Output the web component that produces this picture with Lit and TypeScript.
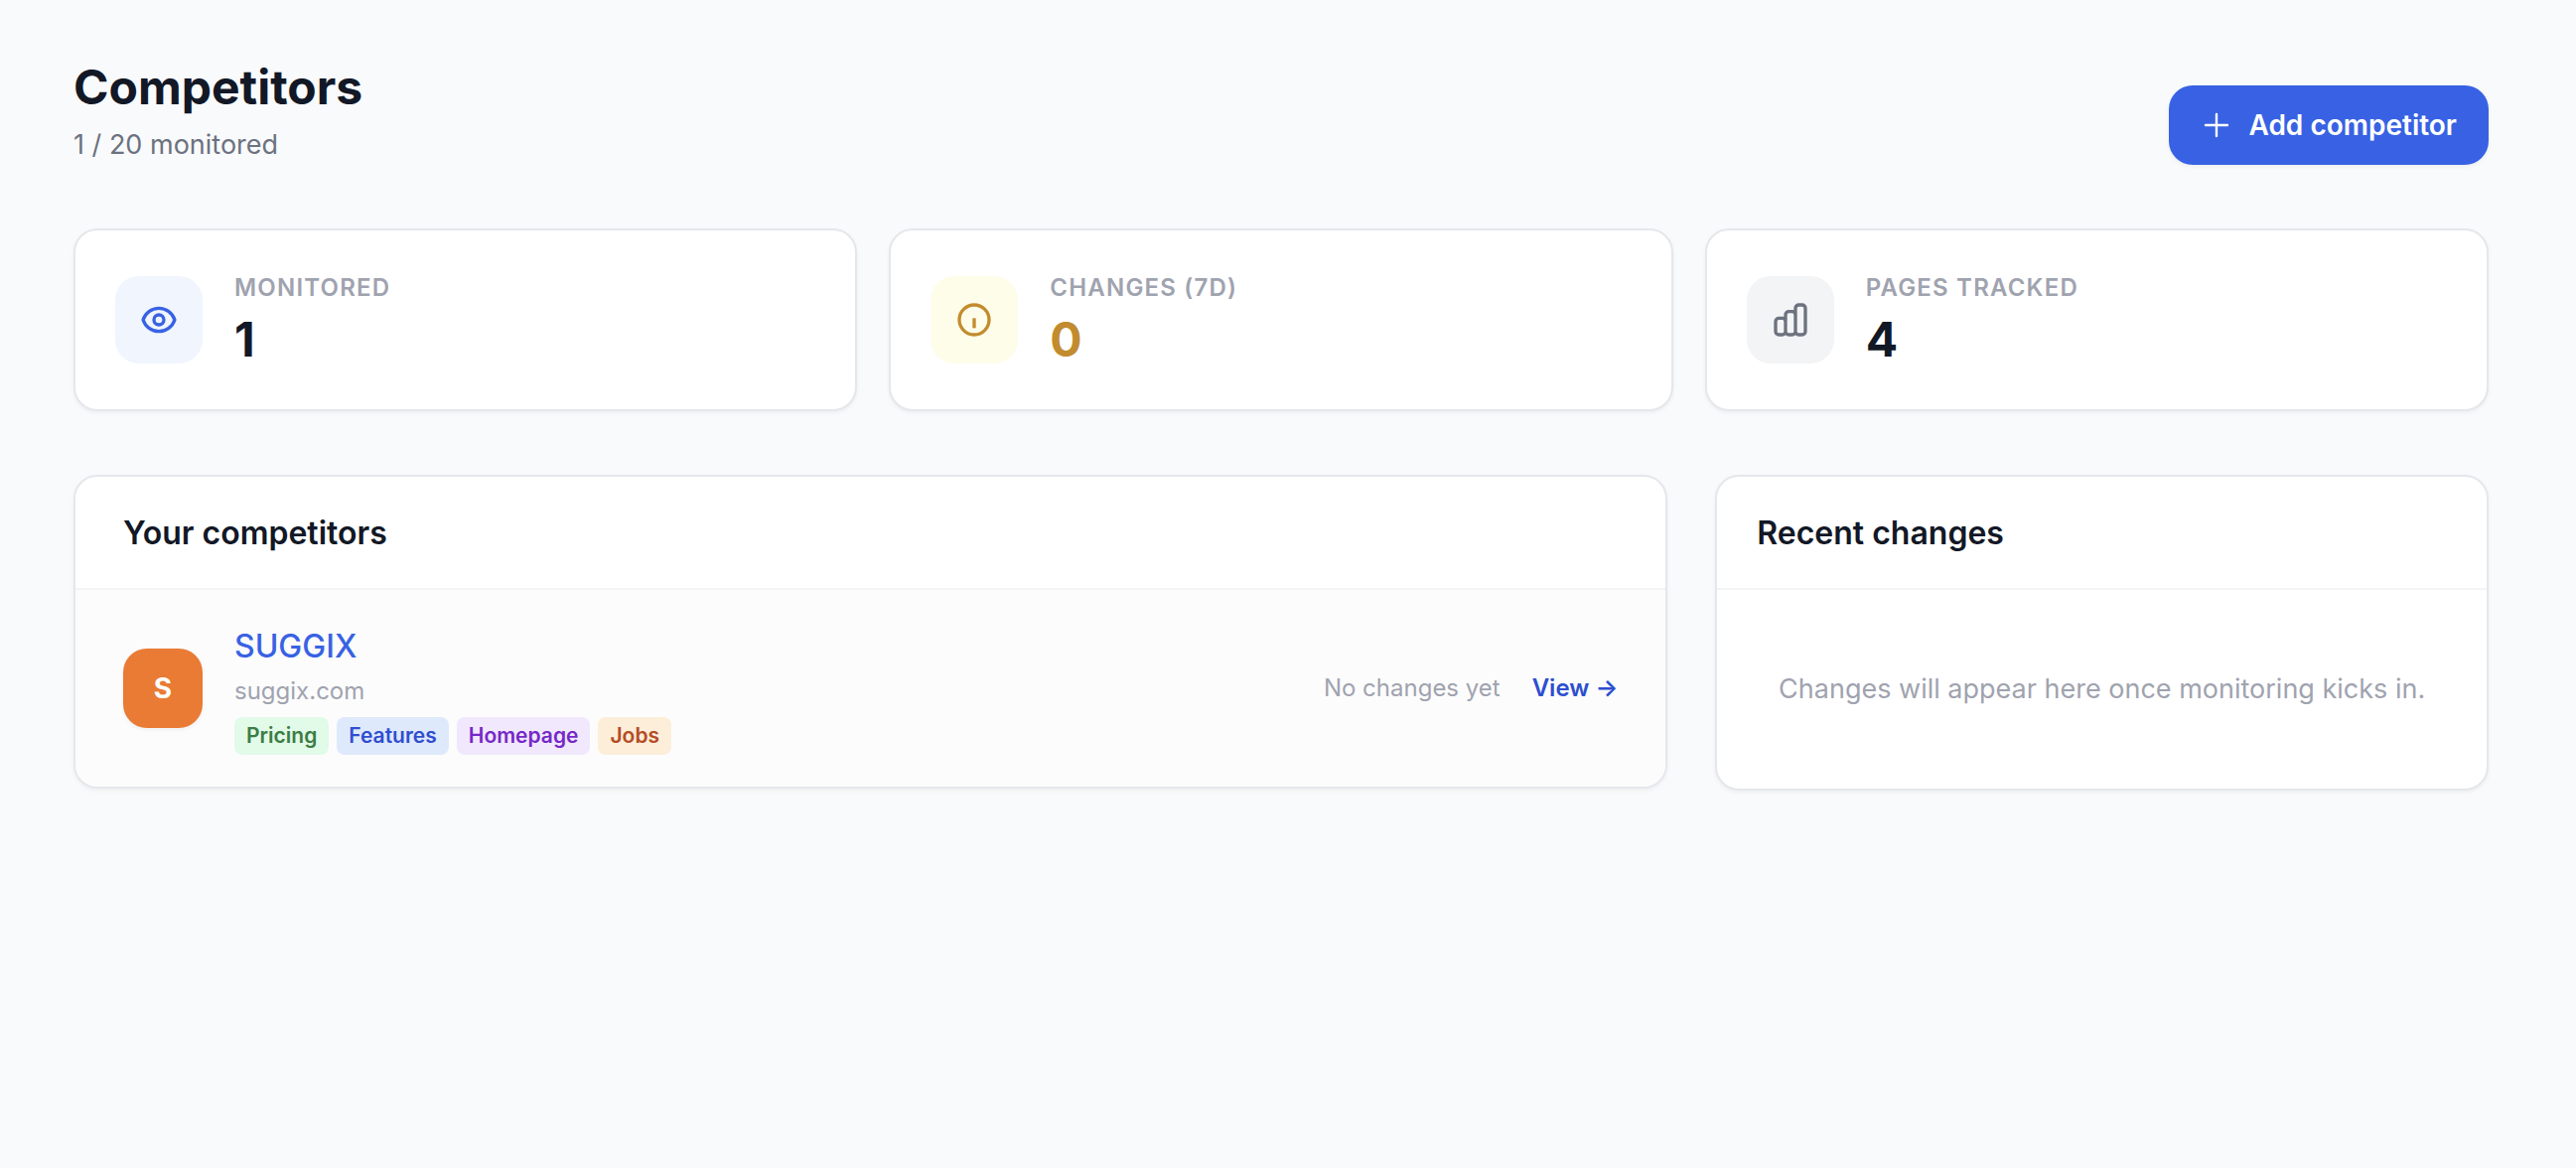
import { LitElement, html, css, svg } from "lit";
import { customElement, property } from "lit/decorators.js";

type Tone = "blue" | "amber" | "gray";

interface Competitor {
  name: string;
  domain: string;
  pages: { label: string; kind: string }[];
  status: string;
}

const icons = {
  blue: svg`<path d="M15 12a3 3 0 11-6 0 3 3 0 016 0z"/><path d="M2.458 12C3.732 7.943 7.523 5 12 5c4.478 0 8.268 2.943 9.542 7-1.274 4.057-5.064 7-9.542 7-4.477 0-8.268-2.943-9.542-7z"/>`,
  amber: svg`<circle cx="12" cy="12" r="9"/><path d="M12 11v6"/>`,
  gray: svg`<path d="M9 19v-6a2 2 0 00-2-2H5a2 2 0 00-2 2v6a2 2 0 002 2h2a2 2 0 002-2zm0 0V9a2 2 0 012-2h2a2 2 0 012 2v10m-6 0a2 2 0 002 2h2a2 2 0 002-2m0 0V5a2 2 0 012-2h2a2 2 0 012 2v14a2 2 0 01-2 2h-2a2 2 0 01-2-2z"/>`,
};

@customElement("stat-card")
export class StatCard extends LitElement {
  @property() label = "";
  @property() value = "";
  @property() tone: Tone = "gray";

  static styles = css`
    :host {
      display: flex;
      align-items: center;
      gap: 32px;
      padding: 40px;
      box-sizing: border-box;
      background: #fff;
      border: 2px solid #e5e7eb;
      border-radius: 24px;
      box-shadow: 0 2px 4px rgba(0, 0, 0, 0.05);
    }
    .icon {
      display: flex;
      align-items: center;
      justify-content: center;
      flex: none;
      width: 88px;
      height: 88px;
      border-radius: 24px;
    }
    .icon svg {
      width: 40px;
      height: 40px;
      fill: none;
      stroke: currentColor;
      stroke-width: 2;
    }
    .icon.blue { background: #f0f5fe; color: #3862e3; }
    .icon.amber { background: #fefdea; color: #c28c2e; }
    .icon.gray { background: #f3f4f6; color: #6c727f; }
    .label {
      margin: 0 0 4px;
      font-size: 24px;
      line-height: 36px;
      font-weight: 600;
      letter-spacing: 0.05em;
      text-transform: uppercase;
      color: #9fa3af;
    }
    .value {
      margin: 0;
      font-size: 48px;
      line-height: 60px;
      font-weight: 700;
      color: #121826;
    }
    .value.amber { color: #c28c2e; }
  `;

  render() {
    return html`
      <div class="icon ${this.tone}">
        <svg viewBox="0 0 24 24" aria-hidden="true">${icons[this.tone]}</svg>
      </div>
      <div>
        <p class="label">${this.label}</p>
        <p class="value ${this.tone}">${this.value}</p>
      </div>
    `;
  }
}

@customElement("app-root")
export class AppRoot extends LitElement {
  private competitors: Competitor[] = [
    {
      name: "SUGGIX",
      domain: "suggix.com",
      pages: [
        { label: "Pricing", kind: "pricing" },
        { label: "Features", kind: "features" },
        { label: "Homepage", kind: "homepage" },
        { label: "Jobs", kind: "jobs" },
      ],
      status: "No changes yet",
    },
  ];

  static styles = css`
    :host {
      display: block;
      min-height: 100vh;
      box-sizing: border-box;
      padding: 56px 88px 56px 74px;
      background: #f9fafc;
      color: #121826;
      font-family: Inter, "Liberation Sans", sans-serif;
    }
    h1, h2, h3, p, ul { margin: 0; padding: 0; }
    a { text-decoration: none; }
    .top {
      display: flex;
      align-items: flex-end;
      justify-content: space-between;
      margin-bottom: 64px;
    }
    .title {
      font-size: 48px;
      line-height: 64px;
      font-weight: 700;
    }
    .subtitle {
      margin-top: 6px;
      font-size: 27px;
      line-height: 40px;
      color: #6c727f;
    }
    .add {
      display: flex;
      align-items: center;
      gap: 16px;
      height: 80px;
      padding: 0 32px;
      border: 0;
      border-radius: 24px;
      background: #3862e3;
      color: #fff;
      font: 600 28px/40px Inter, "Liberation Sans", sans-serif;
      box-shadow: 0 2px 4px rgba(0, 0, 0, 0.05);
      cursor: pointer;
    }
    .add svg {
      width: 32px;
      height: 32px;
      fill: none;
      stroke: currentColor;
      stroke-width: 1.8;
      stroke-linecap: round;
    }
    .stats {
      display: grid;
      grid-template-columns: repeat(3, 1fr);
      gap: 32px;
      margin-bottom: 64px;
    }
    .panels {
      display: grid;
      grid-template-columns: repeat(3, 1fr);
      gap: 48px;
      align-items: start;
    }
    .panel {
      overflow: hidden;
      background: #fff;
      border: 2px solid #e5e7eb;
      border-radius: 24px;
      box-shadow: 0 2px 4px rgba(0, 0, 0, 0.05);
    }
    .panel.wide { grid-column: span 2; }
    .heading {
      padding: 33px 40px 31px;
      border-bottom: 2px solid #f3f4f6;
      font-size: 32px;
      line-height: 48px;
      font-weight: 600;
    }
    .wide .heading { padding: 33px 48px 31px; }
    .list { list-style: none; }
    .row {
      display: flex;
      align-items: center;
      gap: 32px;
      padding: 32px 48px;
      background: #fcfcfc;
    }
    .avatar {
      display: flex;
      align-items: center;
      justify-content: center;
      flex: none;
      width: 80px;
      height: 80px;
      border-radius: 24px;
      background: #e97b35;
      color: #fff;
      font-size: 28px;
      font-weight: 700;
      box-shadow: 0 2px 4px rgba(0, 0, 0, 0.05);
    }
    .info { flex: 1; min-width: 0; }
    .name {
      display: block;
      font-size: 32px;
      line-height: 50px;
      font-weight: 500;
      color: #3862e3;
    }
    .domain {
      margin-top: 4px;
      font-size: 24px;
      line-height: 32px;
      color: #9fa3af;
    }
    .tags {
      display: flex;
      flex-wrap: wrap;
      gap: 8px;
      margin-top: 10px;
      list-style: none;
    }
    .tag {
      padding: 4px 12px;
      border-radius: 8px;
      font-size: 21px;
      line-height: 30px;
      font-weight: 600;
    }
    .tag.pricing { background: #e2fae8; color: #3b7d44; }
    .tag.features { background: #dfe9fc; color: #2f4ed0; }
    .tag.homepage { background: #f1e8fd; color: #7528c8; }
    .tag.jobs { background: #fceed9; color: #b54c24; }
    .status {
      font-size: 24px;
      line-height: 32px;
      color: #9fa3af;
    }
    .view {
      font-size: 24px;
      line-height: 32px;
      font-weight: 600;
      color: #2d4ed0;
    }
    .empty {
      padding: 80px 48px;
      text-align: center;
      font-size: 27px;
      line-height: 40px;
      color: #9fa3af;
    }
  `;

  render() {
    return html`
      <header class="top">
        <div>
          <h1 class="title">Competitors</h1>
          <p class="subtitle">1 / 20 monitored</p>
        </div>
        <button class="add" type="button">
          <svg viewBox="0 0 24 24" aria-hidden="true">
            <path d="M12 3.75v16.5M3.75 12h16.5" />
          </svg>
          Add competitor
        </button>
      </header>

      <section class="stats">
        <stat-card label="Monitored" value="1" tone="blue"></stat-card>
        <stat-card label="Changes (7d)" value="0" tone="amber"></stat-card>
        <stat-card label="Pages tracked" value="4" tone="gray"></stat-card>
      </section>

      <div class="panels">
        <section class="panel wide">
          <h2 class="heading">Your competitors</h2>
          <ul class="list">
            ${this.competitors.map(
              (c) => html`
                <li class="row">
                  <div class="avatar">${c.name[0]}</div>
                  <div class="info">
                    <a class="name" href="#">${c.name}</a>
                    <p class="domain">${c.domain}</p>
                    <ul class="tags">
                      ${c.pages.map((p) => html`<li class="tag ${p.kind}">${p.label}</li>`)}
                    </ul>
                  </div>
                  <span class="status">${c.status}</span>
                  <a class="view" href="#">View →</a>
                </li>
              `,
            )}
          </ul>
        </section>

        <section class="panel">
          <h2 class="heading">Recent changes</h2>
          <p class="empty">Changes will appear here once monitoring kicks in.</p>
        </section>
      </div>
    `;
  }
}
